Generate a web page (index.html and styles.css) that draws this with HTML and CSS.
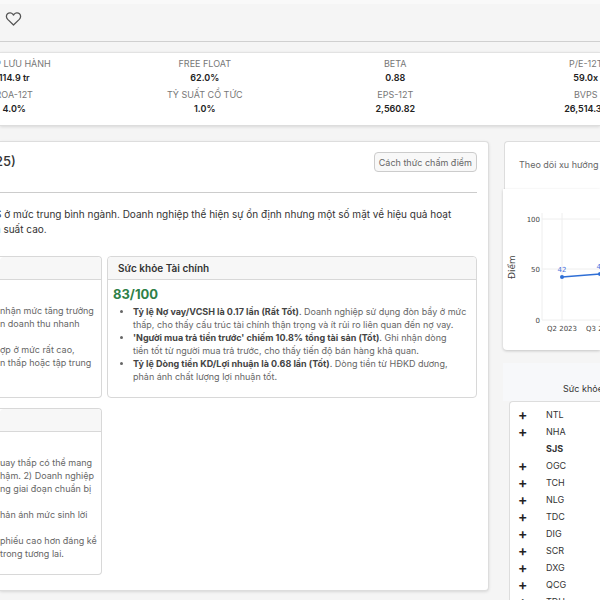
FILE: index.html
```html
<!DOCTYPE html>
<html lang="vi">

<head>
  <meta charset="UTF-8">
  <meta name="viewport" content="width=device-width, initial-scale=1.0">
  <title>SJS</title>
  <link rel="stylesheet" href="styles.css">
</head>

<body>
  <header class="topbar">
    <button type="button" class="icon-btn">
      <svg class="heart" viewBox="0 0 16 16">
        <path d="M8 14 L2.2 8.4 C.5 6.6 .5 4.2 2 2.8 C3.6 1.4 6 1.6 7.3 3.1 L8 4 L8.7 3.1 C10 1.6 12.4 1.4 14 2.8 C15.5 4.2 15.5 6.6 13.8 8.4 Z" />
      </svg>
    </button>
  </header>

  <section class="stats">
    <dl class="stats-grid">
      <div class="stat"><dt>KLCP LƯU HÀNH</dt><dd>114.9 tr</dd></div>
      <div class="stat"><dt>FREE FLOAT</dt><dd>62.0%</dd></div>
      <div class="stat"><dt>BETA</dt><dd>0.88</dd></div>
      <div class="stat"><dt>P/E-12T</dt><dd>59.0x</dd></div>
      <div class="stat"><dt>ROA-12T</dt><dd>4.0%</dd></div>
      <div class="stat"><dt>TỶ SUẤT CỔ TỨC</dt><dd>1.0%</dd></div>
      <div class="stat"><dt>EPS-12T</dt><dd>2,560.82</dd></div>
      <div class="stat"><dt>BVPS</dt><dd>26,514.38</dd></div>
    </dl>
  </section>

  <main class="layout">
    <section class="report">
      <div class="report-head">
        <h1>25)</h1>
        <button type="button" class="method-btn">Cách thức chấm điểm</button>
      </div>
      <p class="summary">S ở mức trung bình ngành. Doanh nghiệp thể hiện sự ổn định nhưng một số mặt về hiệu quả hoạt<br>ả suất cao.</p>

      <div class="cards">
        <article class="card card-cut">
          <h2>&nbsp;</h2>
          <div class="card-body">
            <p>nhận mức tăng trưởng<br>n doanh thu nhanh</p>
            <p>ợp ở mức rất cao,<br>n thấp hoặc tập trung</p>
          </div>
        </article>

        <article class="card">
          <h2>Sức khỏe Tài chính</h2>
          <div class="card-body">
            <div class="score">83/100</div>
            <ul>
              <li><b>Tỷ lệ Nợ vay/VCSH là 0.17 lần (Rất Tốt)</b>. Doanh nghiệp sử dụng đòn bẩy ở mức<br>thấp, cho thấy cấu trúc tài chính thận trọng và ít rủi ro liên quan đến nợ vay.</li>
              <li><b>'Người mua trả tiền trước' chiếm 10.8% tổng tài sản (Tốt)</b>. Ghi nhận dòng<br>tiền tốt từ người mua trả trước, cho thấy tiến độ bán hàng khả quan.</li>
              <li><b>Tỷ lệ Dòng tiền KD/Lợi nhuận là 0.68 lần (Tốt)</b>. Dòng tiền từ HĐKD dương,<br>phản ánh chất lượng lợi nhuận tốt.</li>
            </ul>
          </div>
        </article>

        <article class="card card-cut">
          <h2>&nbsp;</h2>
          <div class="card-body">
            <p>uay thấp có thể mang<br>hậm. 2) Doanh nghiệp<br>ng giai đoạn chuẩn bị</p>
            <p>hản ánh mức sinh lời</p>
            <p>phiếu cao hơn đáng kể<br>trong tương lai.</p>
          </div>
        </article>
      </div>
    </section>

    <aside class="side">
      <section class="trend">
        <h2>Theo dõi xu hướng</h2>
        <div class="chart">
          <svg width="120" height="161" viewBox="0 0 120 161">
            <g class="grid-lines">
              <path d="M39 30H120 M39 80H120 M39 131H120 M39 24V131 M59 24V131 M99 24V131" />
            </g>
            <path class="series" d="M59 88 L97 85 L120 83" />
            <circle class="dot" cx="59" cy="88" r="2" />
            <circle class="dot" cx="97" cy="85" r="2" />
            <g class="axis">
              <text x="37" y="33" text-anchor="end">100</text>
              <text x="37" y="83" text-anchor="end">50</text>
              <text x="37" y="134" text-anchor="end">0</text>
              <text x="59" y="142" text-anchor="middle">Q2 2023</text>
              <text x="98" y="142" text-anchor="middle">Q3 2023</text>
            </g>
            <text class="value" x="59" y="83" text-anchor="middle">42</text>
            <text class="value" x="98" y="80" text-anchor="middle">45</text>
            <text class="axis-title" transform="translate(12 78) rotate(-90)" text-anchor="middle">Điểm</text>
          </svg>
        </div>
      </section>

      <section class="peers">
        <h2>Sức khỏe</h2>
        <table class="peer-table">
          <tbody>
            <tr><td><button type="button" class="add">+</button></td><td>NTL</td></tr>
            <tr><td><button type="button" class="add">+</button></td><td>NHA</td></tr>
            <tr class="current"><td></td><td>SJS</td></tr>
            <tr><td><button type="button" class="add">+</button></td><td>OGC</td></tr>
            <tr><td><button type="button" class="add">+</button></td><td>TCH</td></tr>
            <tr><td><button type="button" class="add">+</button></td><td>NLG</td></tr>
            <tr><td><button type="button" class="add">+</button></td><td>TDC</td></tr>
            <tr><td><button type="button" class="add">+</button></td><td>DIG</td></tr>
            <tr><td><button type="button" class="add">+</button></td><td>SCR</td></tr>
            <tr><td><button type="button" class="add">+</button></td><td>DXG</td></tr>
            <tr><td><button type="button" class="add">+</button></td><td>QCG</td></tr>
            <tr><td><button type="button" class="add">+</button></td><td>TDH</td></tr>
          </tbody>
        </table>
      </section>
    </aside>
  </main>
</body>

</html>
```
FILE: styles.css
```css
* {
  box-sizing: border-box;
}

body {
  margin: 0;
  height: 100vh;
  overflow: hidden;
  background: #f5f5f5;
  color: #333;
  font-family: Inter, "Noto Sans", sans-serif;
  font-size: 9px;
  line-height: 13px;
}

h1,
h2,
p,
dl,
dd {
  margin: 0;
}

button {
  font-family: inherit;
  cursor: pointer;
}

/* Top bar */

.topbar {
  display: flex;
  align-items: center;
  height: 42px;
  padding: 0 5px 8px;
  border-top: 4px solid #f9f9f9;
  border-bottom: 1px solid #d0d0d0;
}

.icon-btn {
  display: flex;
  padding: 0;
  border: none;
  background: none;
}

.heart {
  width: 17px;
  height: 16px;
  fill: none;
  stroke: #555;
  stroke-width: 1.3;
  stroke-linejoin: round;
}

/* Key figures */

.stats {
  margin: 10px 0 15px;
  padding: 5px 0 9px;
  background: #fff;
  border-top: 1px solid #e2e2e2;
  border-bottom: 1px solid #ddd;
  box-shadow: 0 1px 3px rgba(0, 0, 0, 0.12);
}

/* outer columns run past both edges of the window */
.stats-grid {
  display: grid;
  grid-template-columns: repeat(4, 1fr);
  row-gap: 4px;
  margin: 0 -81px;
  text-align: center;
}

.stat dt {
  color: #777;
  line-height: 12px;
}

.stat dd {
  line-height: 15px;
  font-weight: 600;
  color: #222;
}

/* Columns */

.layout {
  display: grid;
  grid-template-columns: minmax(0, 1fr) 97px;
  gap: 14px;
  align-items: start;
}

.report {
  padding: 10px 11px 15px 0;
  background: #fff;
  border: 1px solid #ddd;
  border-left: none;
  border-radius: 0 4px 4px 0;
  box-shadow: 0 1px 3px rgba(0, 0, 0, 0.12);
}

.report-head {
  display: flex;
  justify-content: space-between;
  align-items: flex-start;
  height: 41px;
  margin-bottom: 14px;
  border-bottom: 1px solid #ccc;
}

.report-head h1 {
  margin-left: -5px;
  font-size: 13px;
  line-height: 18px;
  font-weight: 500;
}

.method-btn {
  height: 20px;
  padding: 0 4px;
  border: 1px solid #ccc;
  border-radius: 4px;
  background: #f8f8f8;
  color: #666;
  font-size: 9px;
}

.summary {
  margin: 0 -10px 19px -5px;
  font-size: 10px;
  line-height: 15px;
  white-space: nowrap;
}

/* Score cards */

.cards {
  display: grid;
  grid-template-columns: 102px minmax(0, 1fr);
  gap: 10px 5px;
}

.card {
  border: 1px solid #d8d8d8;
  border-radius: 4px;
}

.card h2 {
  padding: 0 10px;
  background: #f7f7f7;
  border-bottom: 1px solid #d8d8d8;
  border-radius: 4px 4px 0 0;
  font-size: 10px;
  line-height: 22px;
  font-weight: 600;
}

.card-body {
  padding: 5px 5px 14px;
  color: #666;
}

.card-cut {
  border-left: none;
  border-radius: 0 4px 4px 0;
}

.card-cut .card-body {
  padding: 24px 0 14px;
  white-space: nowrap;
}

.card-cut p + p {
  margin-top: 13px;
}

.score {
  color: #2e8048;
  font-size: 13px;
  line-height: 18px;
  font-weight: 700;
}

.card ul {
  margin: 2px 0 0;
  padding-left: 20px;
}

.card b {
  color: #444;
  font-weight: 700;
}

/* Trend chart */

.side h2 {
  font-weight: 400;
  white-space: nowrap;
}

.trend h2 {
  height: 48px;
  margin-left: 1px;
  padding: 16px 0 0 14px;
  background: #fff;
  border: 1px solid #ddd;
  border-right: none;
  border-bottom: none;
  border-radius: 4px 0 0 0;
  color: #666;
  font-size: 9px;
}

.chart {
  height: 161px;
  overflow: hidden;
  background: #fff;
  border-radius: 0 0 0 4px;
  box-shadow: 0 1px 3px rgba(0, 0, 0, 0.2);
}

.chart svg {
  display: block;
}

.grid-lines {
  fill: none;
  stroke: #eee;
}

.series {
  fill: none;
  stroke: #2f6fd6;
  stroke-width: 1.5;
}

.dot {
  fill: #2f6fd6;
}

.axis,
.axis-title,
.value {
  font-family: "DejaVu Sans", sans-serif;
  font-size: 7px;
  fill: #444;
}

.axis-title {
  font-size: 9px;
}

.value {
  fill: #4a6fdc;
}

/* Peers */

.peers {
  margin-top: 13px;
}

.peers h2 {
  padding: 19px 0 6px 60px;
  background: #f7f8fa;
  font-size: 9px;
}

.peer-table {
  width: calc(100% - 6px);
  margin-left: 6px;
  padding: 4px 0;
  border: 1px solid #ddd;
  border-right: none;
  border-radius: 4px 0 0 0;
  border-spacing: 0;
  background: #fff;
}

.peer-table td {
  height: 17px;
  padding: 0;
}

.peer-table td:first-child {
  width: 36px;
  padding-left: 8px;
}

.add {
  display: block;
  padding: 0;
  border: none;
  background: none;
  color: #222;
  font-size: 14px;
  line-height: 15px;
  font-weight: 600;
}

.current {
  font-weight: 700;
}
```
